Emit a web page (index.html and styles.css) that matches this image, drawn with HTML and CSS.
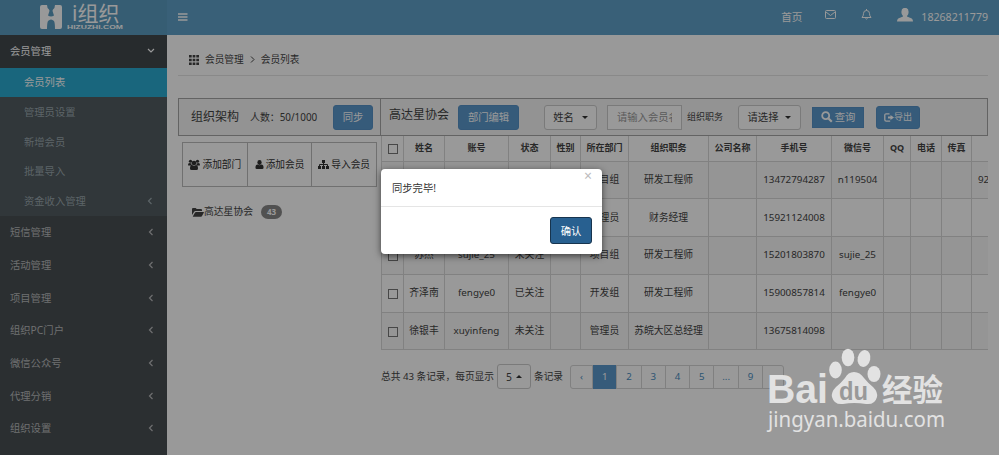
FILE: index.html
```
<!DOCTYPE html>
<html lang="zh-CN">
<head>
  <meta charset="UTF-8">
  <title>会员列表</title>
  <link rel="stylesheet" href="styles.css">
</head>
<body>
  <svg class="sprite" width="0" height="0">
    <symbol id="left" viewBox="0 0 6 8"><path d="M4.5 1L1.5 4l3 3" fill="none" stroke="currentColor" stroke-width="1.2"/></symbol>
    <symbol id="users" viewBox="0 0 24 22"><circle cx="5" cy="4.5" r="3.2"/><circle cx="19" cy="4.5" r="3.2"/><circle cx="12" cy="8" r="4.6"/><path d="M0 12q0-4 3-4 2 1 3.500 0 0 3 1.500 5H2q-2 0-2-1zM24 12q0-4-3-4-2 1-3.500 0 0 3-1.500 5h6q2 0 2-1zM4 19q0-7 4-7 4 3 8 0 4 0 4 7 0 3-3 3H7q-3 0-3-3z"/></symbol>
    <symbol id="user" viewBox="0 0 20 20"><ellipse cx="10" cy="5.500" rx="4.800" ry="5.500"/><path d="M1 17q0-7 5-7 4 3 8 0 5 0 5 7 0 3-3 3H4q-3 0-3-3z"/></symbol>
  </svg>

  <div class="app">
    <header class="header">
      <div class="logo">
        <svg width="22" height="24" viewBox="0 0 22 24"><path d="M2 0h5q0 3 2 4.500 1 1 0 3l-1 3q3 2 6 0l-1-3q-1-2 0-3Q15 3 15 0h5q2 0 2 2v20q0 2-2 2h-5q0-6-1-8-3-3-6 0-1 2-1 8H2q-2 0-2-2V2q0-2 2-2z"/></svg>
        <div class="logo-text">
          <span class="logo-name">i组织</span>
          <span class="logo-url">HIZUZHI.COM</span>
        </div>
      </div>
      <div class="navbar">
        <svg width="10" height="8" viewBox="0 0 10 8"><path d="M0 1h9.500M0 4h9.500M0 7h9.500" stroke="currentColor" stroke-width="1.400"/></svg>
        <div class="nav-right">
          <span class="nav-home">首页</span>
          <svg class="nav-mail outline" width="11" height="9" viewBox="0 0 11 9"><rect x=".5" y=".5" width="10" height="8" rx="1"/><path d="M1 2l4.500 3.500L10 2"/></svg>
          <svg class="nav-bell outline" width="11" height="11" viewBox="0 0 11 11"><path d="M5.500 0v1.500M1 8.500Q2.500 7 2.500 4.500q0-3 3-3t3 3q0 2.500 1.500 4zM4.500 9.500q1 1.200 2 0"/></svg>
          <svg class="nav-user" width="16" height="14" viewBox="0 0 16 14"><ellipse cx="8" cy="4" rx="3.600" ry="4.200"/><path d="M0 13.500q0-3 3-3.800l3-1.200V7h4v1.500l3 1.200q3 .8 3 3.800z"/></svg>
          <span>18268211779</span>
        </div>
      </div>
    </header>

    <div class="main">
      <nav class="sidebar">
        <a class="menu-item open">会员管理<svg width="8" height="6" viewBox="0 0 8 6"><path d="M1 1l3 3 3-3" fill="none" stroke="currentColor" stroke-width="1.200"/></svg></a>
        <div class="submenu">
          <a class="active">会员列表</a>
          <a>管理员设置</a>
          <a>新增会员</a>
          <a>批量导入</a>
          <a>资金收入管理<svg width="6" height="8"><use href="#left"/></svg></a>
        </div>
        <a class="menu-item">短信管理<svg width="6" height="8"><use href="#left"/></svg></a>
        <a class="menu-item">活动管理<svg width="6" height="8"><use href="#left"/></svg></a>
        <a class="menu-item">项目管理<svg width="6" height="8"><use href="#left"/></svg></a>
        <a class="menu-item">组织PC门户<svg width="6" height="8"><use href="#left"/></svg></a>
        <a class="menu-item">微信公众号<svg width="6" height="8"><use href="#left"/></svg></a>
        <a class="menu-item">代理分销<svg width="6" height="8"><use href="#left"/></svg></a>
        <a class="menu-item">组织设置<svg width="6" height="8"><use href="#left"/></svg></a>
      </nav>

      <div class="content">
        <div class="breadcrumb">
          <svg width="10" height="10" viewBox="0 0 10 10"><path d="M0 1.300h10M0 5h10M0 8.700h10" stroke="currentColor" stroke-width="2.500" stroke-dasharray="2.700 .95"/></svg>
          <span>会员管理</span>
          <svg width="5" height="7" viewBox="0 0 5 7"><path d="M1 .5l3 3-3 3" fill="none" stroke="currentColor"/></svg>
          <span>会员列表</span>
        </div>

        <div class="toolbar">
          <div class="toolbar-left">
            <span class="title">组织架构</span>
            <span class="count">人数：50/1000</span>
            <button class="btn btn-sync">同步</button>
          </div>
          <div class="toolbar-right">
            <span class="title org">高达星协会</span>
            <button class="btn btn-edit">部门编辑</button>
            <button class="select select-name">姓名<i class="caret"></i></button>
            <div class="search-input">请输入会员名</div>
            <span class="label">组织职务</span>
            <button class="select select-post">请选择<i class="caret"></i></button>
            <button class="btn btn-search"><svg class="outline" width="12" height="12" viewBox="0 0 12 12"><circle cx="4.700" cy="4.700" r="3.500" stroke-width="1.800"/><path d="M7.500 7.500l3.300 3.300" stroke-width="2.200"/></svg>查询</button>
            <button class="btn btn-export"><svg width="10" height="9" viewBox="0 0 10 9"><path d="M5.500.8H2.200Q.8.8.8 2.200v4.600q0 1.400 1.400 1.400h4" fill="none" stroke="currentColor" stroke-width="1.300"/><path d="M4 3.500h2.500V2L10 4.500 6.500 7V5.500H4z"/></svg>导出</button>
          </div>
        </div>

        <div class="panels">
          <div class="tree">
            <div class="tree-actions">
              <button><svg width="12" height="11"><use href="#users"/></svg>添加部门</button>
              <button><svg width="9" height="9"><use href="#user"/></svg>添加会员</button>
              <button><svg width="11" height="9" viewBox="0 0 11 9"><path d="M4 0h3v3H4zM0 6h3v3H0zM4 6h3v3H4zM8 6h3v3H8z"/><path d="M5.500 3v3M1.500 6V4.500h8V6" fill="none" stroke="currentColor"/></svg>导入会员</button>
            </div>
            <div class="tree-node">
              <svg width="12" height="9" viewBox="0 0 12 9"><path d="M0 7V1q0-1 1-1h2.500q.8 0 1 1H9q1 0 1 1v1H3.500Q2.500 3 2 4zM.8 8.500L3 4.500Q3.300 4 4 4h7.500q.7 0 .3.700L10 8q-.3.700-1 .7H1z"/></svg>
              <span>高达星协会</span>
              <span class="badge">43</span>
            </div>
          </div>

          <div class="members">
            <div class="table-wrap">
              <table>
                <colgroup>
                  <col class="c-check"><col class="c-name"><col class="c-account"><col class="c-state"><col class="c-sex"><col class="c-dept"><col class="c-post"><col class="c-company"><col class="c-phone"><col class="c-wechat"><col class="c-qq"><col class="c-tel"><col class="c-fax"><col class="c-mail">
                </colgroup>
                <thead>
                  <tr><th><i class="check"></i></th><th>姓名</th><th>账号</th><th>状态</th><th>性别</th><th>所在部门</th><th>组织职务</th><th>公司名称</th><th>手机号</th><th>微信号</th><th>QQ</th><th>电话</th><th>传真</th><th></th></tr>
                </thead>
                <tbody>
                  <tr><td><i class="check"></i></td><td></td><td></td><td></td><td></td><td>项目组</td><td>研发工程师</td><td></td><td>13472794287</td><td>n119504</td><td></td><td></td><td></td><td class="mail">92</td></tr>
                  <tr><td><i class="check"></i></td><td></td><td></td><td></td><td></td><td>管理员</td><td>财务经理</td><td></td><td>15921124008</td><td></td><td></td><td></td><td></td><td></td></tr>
                  <tr><td><i class="check"></i></td><td>苏杰</td><td>sujie_25</td><td>未关注</td><td></td><td>项目组</td><td>研发工程师</td><td></td><td>15201803870</td><td>sujie_25</td><td></td><td></td><td></td><td></td></tr>
                  <tr><td><i class="check"></i></td><td>齐泽南</td><td>fengye0</td><td>已关注</td><td></td><td>开发组</td><td>研发工程师</td><td></td><td>15900857814</td><td>fengye0</td><td></td><td></td><td></td><td></td></tr>
                  <tr><td><i class="check"></i></td><td>徐银丰</td><td>xuyinfeng</td><td>未关注</td><td></td><td>管理员</td><td>苏皖大区总经理</td><td></td><td>13675814098</td><td></td><td></td><td></td><td></td><td></td></tr>
                </tbody>
              </table>
            </div>
            <div class="table-footer">
              <span class="total">总共 43 条记录，每页显示</span>
              <button class="select page-size">5<i class="caret up"></i></button>
              <span class="unit">条记录</span>
              <div class="pagination">
                <a>‹</a><a class="current">1</a><a>2</a><a>3</a><a>4</a><a>5</a><a>...</a><a>9</a><a>›</a>
              </div>
            </div>
          </div>
        </div>
      </div>
    </div>

    <div class="backdrop"></div>
    <div class="modal">
      <button class="close">×</button>
      <div class="modal-body">同步完毕!</div>
      <div class="modal-footer"><button class="confirm">确认</button></div>
    </div>

    <svg class="watermark" width="200" height="95" viewBox="0 0 200 95">
      <text class="wm-brand" x="17" y="63" textLength="61" lengthAdjust="spacingAndGlyphs">Bai</text>
      <ellipse cx="85.500" cy="30" rx="6.300" ry="8.500"/>
      <ellipse cx="98" cy="17.500" rx="6.300" ry="8.700"/>
      <ellipse cx="114" cy="18.500" rx="6.300" ry="8.500" transform="rotate(12 114 18.500)"/>
      <ellipse cx="124" cy="34" rx="6.500" ry="8"/>
      <path d="M104 32q6 0 10 6 4 5 9 9 5 5 4 10-2 8-11 7-12-2-23 0-9 1-11-7-1-5 4-10 5-4 9-9 3-6 9-6z"/>
      <text class="wm-du" x="89" y="60" textLength="29" lengthAdjust="spacingAndGlyphs">du</text>
      <text class="wm-cn" x="132" y="61" textLength="61" lengthAdjust="spacingAndGlyphs">经验</text>
      <text class="wm-url" x="18" y="87" textLength="177" lengthAdjust="spacingAndGlyphs">jingyan.baidu.com</text>
    </svg>
  </div>
</body>
</html>
```
FILE: styles.css
```
* {
  box-sizing: border-box;
}
body {
  margin: 0;
  background: #fff;
  color: #444;
  font-family: "Noto Sans", "Noto Sans CJK SC", sans-serif;
  font-size: 10px;
  line-height: 14px;
  overflow: hidden;
}
button {
  font: inherit;
  color: inherit;
  padding: 0;
  margin: 0;
  white-space: nowrap;
}
svg {
  flex: none;
  fill: currentColor;
}
.outline {
  fill: none;
  stroke: currentColor;
}
.sprite {
  position: absolute;
}
.app {
  position: relative;
  width: 999px;
  height: 455px;
  overflow: hidden;
  display: flex;
  flex-direction: column;
  white-space: nowrap;
}

/* header */
.header {
  display: flex;
  height: 35px;
  flex: none;
  color: #fff;
}
.logo {
  width: 167px;
  background: #5b9cc0;
  display: flex;
  padding: 5px 0 0 40px;
  gap: 5px;
}
.logo-text {
  display: flex;
  flex-direction: column;
}
.logo-name {
  font-size: 21px;
  line-height: 17px;
  height: 19px;
  padding-left: 5px;
}
.logo-url {
  font-family: "Liberation Sans", sans-serif;
  font-size: 5.500px;
  font-weight: bold;
  line-height: 6px;
  transform: scaleX(1.55);
  transform-origin: left;
}
.navbar {
  flex: 1;
  background: #5fa1c8;
  display: flex;
  align-items: center;
  justify-content: space-between;
  padding: 0 11px 2px;
}
.nav-right {
  display: flex;
  align-items: center;
  font-size: 10.600px;
}
.nav-home {
  margin-right: 23px;
}
.nav-mail {
  margin: 0 25px 5px 0;
}
.nav-bell {
  margin: 0 25px 5px 0;
}
.nav-user {
  margin: 0 8px 3px 0;
}

/* sidebar */
.main {
  display: flex;
  flex: 1;
}
.sidebar {
  width: 167px;
  flex: none;
  background: #494f53;
  color: #b8babb;
  font-size: 10.300px;
}
.menu-item,
.submenu a {
  display: flex;
  align-items: center;
  justify-content: space-between;
}
.menu-item {
  height: 32.700px;
  padding: 0 13px 0 10px;
}
.menu-item.open {
  height: 32.500px;
  background: #41484c;
  color: #fff;
  padding-right: 12px;
}
.submenu {
  background: #525c61;
  color: #9aa7ad;
}
.submenu a {
  height: 29.700px;
  padding: 0 14px 0 24px;
}
.submenu .active {
  background: #2babd0;
  color: #fff;
}

/* content */
.content {
  flex: 1;
  min-width: 0;
  padding: 0 11px;
}
.breadcrumb {
  height: 41px;
  padding: 9px 0 0 11px;
  display: flex;
  align-items: center;
  gap: 6px;
  border-bottom: 1px solid #e4e4e4;
  font-size: 9.700px;
}
.toolbar {
  display: flex;
  height: 38px;
  margin-top: 22px;
  border: 1px solid #a5a5a5;
  background: #f5f5f5;
}
.toolbar-left,
.toolbar-right {
  display: flex;
  align-items: center;
}
.toolbar-left {
  width: 202px;
  padding-left: 12px;
  border-right: 1px solid #a5a5a5;
}
.toolbar-right {
  padding-left: 8px;
}
.title {
  font-size: 12px;
}
.org {
  padding-bottom: 5px;
  width: 69px;
}
.count {
  margin-left: 11px;
  width: 83px;
  font-size: 9.900px;
}
.btn {
  height: 25px;
  border: 1px solid #5592c6;
  border-radius: 3px;
  background: #5a98cc;
  color: #fff;
  display: flex;
  align-items: center;
  justify-content: center;
  font-size: 10.300px;
}
.btn-sync {
  width: 40px;
}
.btn-edit {
  width: 61px;
}
.btn-search {
  width: 52px;
  height: 21px;
  margin-left: 11px;
  border-radius: 0;
  gap: 2px;
}
.btn-export {
  width: 44px;
  height: 23px;
  margin-left: 12px;
  font-size: 9px;
}
.select {
  height: 25px;
  border: 1px solid #ccc;
  border-radius: 3px;
  background: #fff;
  display: flex;
  align-items: center;
  justify-content: center;
  gap: 8px;
  font-size: 10.300px;
}
.select-name {
  width: 53px;
  margin-left: 25px;
}
.select-post {
  width: 63px;
  gap: 7px;
}
.caret {
  border: 3px solid transparent;
  border-top-color: #333;
  border-bottom: 0;
}
.caret.up {
  border-top: 0;
  border-bottom: 3px solid #333;
}
.search-input {
  width: 75px;
  height: 25px;
  margin-left: 10px;
  padding: 5px 9px;
  border: 1px solid #ccc;
  background: #fff;
  color: #999;
  font-size: 10.300px;
  line-height: 13px;
  overflow: clip;
  overflow-clip-margin: content-box;
}
.label {
  width: 56px;
  padding-left: 5px;
  font-size: 9px;
}
.panels {
  display: flex;
}
.tree {
  width: 203px;
  flex: none;
  padding: 6px 4px 0 4px;
}
.tree-actions {
  display: flex;
  height: 45px;
  border: 1px solid #bbb;
  color: #333;
}
.tree-actions button {
  flex: 1;
  display: flex;
  align-items: center;
  justify-content: center;
  gap: 2px;
  border: 0;
  background: none;
  font-size: 9.700px;
}
.tree-actions button + button {
  border-left: 1px solid #bbb;
}
.tree-node {
  display: flex;
  align-items: center;
  margin: 18px 0 0 10px;
  font-size: 9.800px;
}
.badge {
  margin-left: 8px;
  width: 21px;
  height: 14px;
  border-radius: 7px;
  background: #888;
  color: #fff;
  text-align: center;
  font-size: 8px;
  font-weight: bold;
}

/* member table */
.members {
  width: 607px;
}
.table-wrap {
  overflow: hidden;
}
table {
  width: 640px;
  table-layout: fixed;
  border-collapse: collapse;
  font-size: 9.800px;
}
th,
td {
  padding: 0;
  border: 1px solid #d8d8d8;
  text-align: center;
}
th {
  height: 25px;
  font-size: 9px;
}
thead th {
  border-top: 0;
}
td {
  height: 37.800px;
}
tbody tr:nth-child(odd) {
  background: #f8f8f8;
}
.c-check { width: 22px; }
.c-name { width: 41px; }
.c-account { width: 64px; }
.c-state { width: 42px; }
.c-sex { width: 30px; }
.c-dept { width: 48px; }
.c-post { width: 80px; }
.c-company { width: 48px; }
.c-phone { width: 75px; }
.c-wechat { width: 52px; }
.c-qq { width: 27px; }
.c-tel { width: 31px; }
.c-fax { width: 30px; }
td.mail {
  text-align: left;
  padding-left: 6px;
}
.check {
  display: block;
  width: 10px;
  height: 10px;
  margin: 2px auto 0;
  border: 1px solid #777;
}
.table-footer {
  display: flex;
  align-items: center;
  padding-top: 14px;
  font-size: 9.700px;
}
.total {
  width: 116px;
}
.page-size {
  width: 34px;
  gap: 4px;
}
.unit {
  width: 39px;
  padding-left: 3px;
}
.pagination {
  display: flex;
  height: 24px;
  border: 1px solid #d5d5d5;
  border-radius: 3px;
  color: #4a8dc0;
}
.pagination a {
  width: 24.300px;
  line-height: 22px;
  text-align: center;
  border-right: 1px solid #d5d5d5;
}
.pagination a:first-child {
  width: 22px;
}
.pagination a:last-child {
  width: 20px;
  border-right: 0;
}
.pagination .current {
  margin: -1px 0;
  line-height: 24px;
  background: #5a98cc;
  color: #fff;
}

/* dialog */
.backdrop {
  position: absolute;
  inset: 0;
  background: rgba(0, 0, 0, 0.4);
}
.modal {
  position: absolute;
  left: 381px;
  top: 169px;
  width: 221px;
  height: 85px;
  border-radius: 4px;
  background: #fff;
  box-shadow: 0 2px 7px rgba(0, 0, 0, 0.6);
  color: #333;
}
.close {
  position: absolute;
  top: 0;
  right: 10px;
  border: 0;
  background: none;
  color: #bbb;
  font-size: 14px;
}
.modal-body {
  height: 38px;
  padding: 12px 11px;
  border-bottom: 1px solid #e5e5e5;
  font-size: 10.300px;
}
.modal-footer {
  display: flex;
  justify-content: flex-end;
  padding: 10px;
}
.confirm {
  width: 42px;
  height: 27px;
  border: 1px solid #17344e;
  border-radius: 3px;
  background: #286090;
  color: #fff;
  font-size: 10.300px;
}

/* watermark */
.watermark {
  position: absolute;
  left: 750px;
  top: 340px;
  fill: #e2e2e2;
}
.wm-brand {
  font: bold 40px "Liberation Sans", sans-serif;
}
.wm-du {
  font: bold 25px "Liberation Sans", sans-serif;
  fill: #999;
}
.wm-cn {
  font: bold 31px "Noto Sans CJK SC", sans-serif;
}
.wm-url {
  font: 22px "Noto Sans", sans-serif;
}
```
